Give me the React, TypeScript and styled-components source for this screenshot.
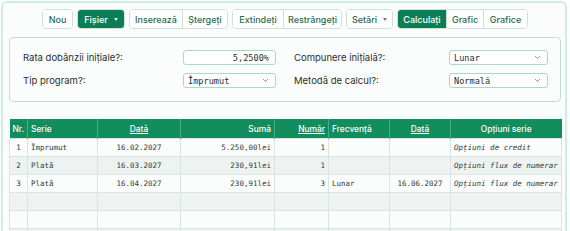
import React from "react";
import styled, { createGlobalStyle, css } from "styled-components";

const GlobalStyle = createGlobalStyle`
    body {
        margin: 0;
        background: #ffffff;
        font-family: Inter, "Noto Sans", sans-serif;
        color: #1f2a26;
    }
`;

const Frame = styled.div`
    margin: 1px 0 0 1px;
    width: 566px;
    box-sizing: border-box;
    border: 2px solid #cdeee0;
    border-bottom: none;
    border-radius: 6px 6px 0 0;
    background: #fafdfc;
    padding: 6px 4px 12px 6px;
`;

const Toolbar = styled.div`
    display: flex;
    justify-content: center;
    gap: 4px;
    height: 20px;
`;

const Group = styled.div`
    display: flex;
    border: 1px solid #cfe2da;
    border-radius: 4px;
    overflow: hidden;
    background: #ffffff;
`;

const ToolButton = styled.button<{ $active?: boolean; $w: number }>`
    width: ${({ $w }) => $w}px;
    height: 100%;
    padding: 0;
    border: none;
    border-left: 1px solid #cfe2da;
    background: #ffffff;
    color: #2b6b52;
    font-family: Inter, sans-serif;
    font-size: 9px;
    font-weight: 500;
    display: flex;
    align-items: center;
    justify-content: center;
    gap: 6px;
    &:first-child {
        border-left: none;
    }
    ${({ $active }) =>
        $active &&
        css`
            background: #0c7d55;
            color: #ffffff;
        `};
`;

const Caret = styled.span<{ $light?: boolean }>`
    width: 0;
    height: 0;
    border-left: 2.5px solid transparent;
    border-right: 2.5px solid transparent;
    border-top: 3px solid ${({ $light }) => ($light ? "#d9efe6" : "#6a7d75")};
`;

const Panel = styled.div`
    margin-top: 8px;
    border: 1px solid #bfe0d4;
    border-radius: 4px;
    background: #fbfdfc;
    padding: 12px 12px 13px 13px;
    display: flex;
    gap: 18px;
`;

const FieldGrid = styled.div<{ $label: number; $field: number }>`
    display: grid;
    grid-template-columns: ${({ $label, $field }) => `${$label}px ${$field}px`};
    row-gap: 8px;
    align-items: center;
`;

const Label = styled.span`
    font-size: 9.5px;
    color: #26302c;
`;

const fieldBase = css`
    height: 15px;
    box-sizing: border-box;
    border: 1px solid #a9d8c6;
    border-radius: 3px;
    background: #ffffff;
    font-family: "DejaVu Sans Mono", monospace;
    font-size: 8.6px;
    color: #2a2f2d;
    display: flex;
    align-items: center;
    padding: 0 6px 0 4px;
`;

const NumberField = styled.div`
    ${fieldBase};
    justify-content: flex-end;
`;

const SelectField = styled.div`
    ${fieldBase};
    justify-content: space-between;
`;

const Chevron = () => (
    <svg width="7" height="5" viewBox="0 0 7 5">
        <path d="M1 1l2.5 2.5L6 1" fill="none" stroke="#7c8a85" strokeWidth="0.9" />
    </svg>
);

const Grid = styled.table`
    margin-top: 17px;
    width: 552px;
    table-layout: fixed;
    border-collapse: collapse;
    font-family: "DejaVu Sans Mono", monospace;
    font-size: 7.5px;
    color: #333a37;
`;

type Align = "left" | "center" | "right";

const HeadCell = styled.th<{ $align: Align; $link?: boolean }>`
    height: 19px;
    padding: 0 3px;
    background: #128d5e;
    border-left: 1px solid #49ad86;
    color: #ffffff;
    font-family: Inter, sans-serif;
    font-size: 8.4px;
    font-weight: 500;
    text-align: ${({ $align }) => $align};
    text-decoration: ${({ $link }) => ($link ? "underline" : "none")};
    white-space: nowrap;
    overflow: hidden;
    &:first-child {
        border-left: none;
    }
`;

const Row = styled.tr`
    background: #fbfcfc;
    &:nth-child(even) {
        background: #eef3f1;
    }
`;

const Cell = styled.td<{ $align: Align; $italic?: boolean }>`
    height: 17px;
    padding: 0 3px;
    border: 1px solid #dae4e0;
    text-align: ${({ $align }) => $align};
    font-style: ${({ $italic }) => ($italic ? "italic" : "normal")};
    white-space: nowrap;
    overflow: hidden;
`;

const columns: { title: string; width: number; align: Align; link?: boolean; cell: Align; italic?: boolean }[] = [
    { title: "Nr.", width: 18, align: "left", cell: "center" },
    { title: "Serie", width: 70, align: "left", cell: "left" },
    { title: "Dată", width: 83, align: "center", link: true, cell: "center" },
    { title: "Sumă", width: 94, align: "right", cell: "right" },
    { title: "Număr", width: 54, align: "right", link: true, cell: "right" },
    { title: "Frecvență", width: 61, align: "left", cell: "left" },
    { title: "Dată", width: 61, align: "center", link: true, cell: "center" },
    { title: "Opțiuni serie", width: 111, align: "center", cell: "left", italic: true },
];

const rows: string[][] = [
    ["1", "Împrumut", "16.02.2027", "5.250,00lei", "1", "", "", "Opțiuni de credit"],
    ["2", "Plată", "16.03.2027", "230,91lei", "1", "", "", "Opțiuni flux de numerar"],
    ["3", "Plată", "16.04.2027", "230,91lei", "3", "Lunar", "16.06.2027", "Opțiuni flux de numerar"],
    ["", "", "", "", "", "", "", ""],
    ["", "", "", "", "", "", "", ""],
    ["", "", "", "", "", "", "", ""],
];

const App: React.FC = () => (
    <>
        <GlobalStyle />
        <Frame>
            <Toolbar>
                <Group>
                    <ToolButton $w={29}>Nou</ToolButton>
                </Group>
                <Group>
                    <ToolButton $w={46} $active>
                        Fișier <Caret $light />
                    </ToolButton>
                </Group>
                <Group>
                    <ToolButton $w={52}>Inserează</ToolButton>
                    <ToolButton $w={45}>Ștergeți</ToolButton>
                </Group>
                <Group>
                    <ToolButton $w={50}>Extindeți</ToolButton>
                    <ToolButton $w={58}>Restrângeți</ToolButton>
                </Group>
                <Group>
                    <ToolButton $w={45}>
                        Setări <Caret />
                    </ToolButton>
                </Group>
                <Group>
                    <ToolButton $w={48} $active>
                        Calculați
                    </ToolButton>
                    <ToolButton $w={37}>Grafic</ToolButton>
                    <ToolButton $w={44}>Grafice</ToolButton>
                </Group>
            </Toolbar>
            <Panel>
                <FieldGrid $label={160} $field={93}>
                    <Label>Rata dobânzii inițiale?:</Label>
                    <NumberField>5,2500%</NumberField>
                    <Label>Tip program?:</Label>
                    <SelectField>
                        Împrumut <Chevron />
                    </SelectField>
                </FieldGrid>
                <FieldGrid $label={155} $field={99}>
                    <Label>Compunere inițială?:</Label>
                    <SelectField>
                        Lunar <Chevron />
                    </SelectField>
                    <Label>Metodă de calcul?:</Label>
                    <SelectField>
                        Normală <Chevron />
                    </SelectField>
                </FieldGrid>
            </Panel>
            <Grid>
                <colgroup>
                    {columns.map((c, i) => (
                        <col key={i} style={{ width: c.width }} />
                    ))}
                </colgroup>
                <thead>
                    <tr>
                        {columns.map((c, i) => (
                            <HeadCell key={i} $align={c.align} $link={c.link}>
                                {c.title}
                            </HeadCell>
                        ))}
                    </tr>
                </thead>
                <tbody>
                    {rows.map((r, ri) => (
                        <Row key={ri}>
                            {r.map((v, ci) => (
                                <Cell key={ci} $align={columns[ci].cell} $italic={columns[ci].italic}>
                                    {v}
                                </Cell>
                            ))}
                        </Row>
                    ))}
                </tbody>
            </Grid>
        </Frame>
    </>
);

export default App;
